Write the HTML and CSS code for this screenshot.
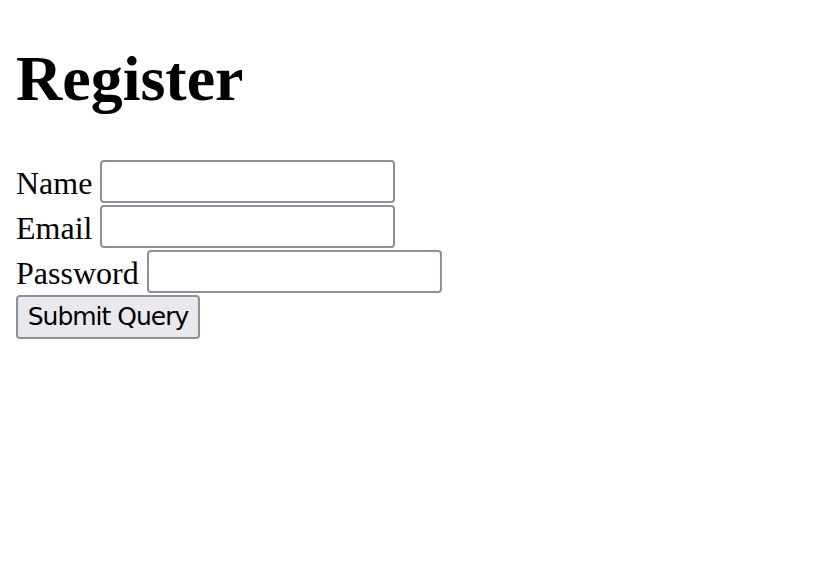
FILE: index.html
```html
<!DOCTYPE html>
<html>
<head>
<meta charset="utf-8">
<title>Register</title>
<link rel="stylesheet" href="styles.css">
</head>
<body>
<h1 class="title">Register</h1>
<form class="form">
  <div class="row"><label class="label">Name</label><input class="field" type="text"></div>
  <div class="row"><label class="label">Email</label><input class="field" type="text"></div>
  <div class="row"><label class="label">Password</label><input class="field" type="password"></div>
  <div class="row"><button class="submit" type="button">Submit Query</button></div>
</form>
</body>
</html>
```
FILE: styles.css
```css
html, body {
  background: #fff;
}
body {
  margin: 16px;
  font-family: "Liberation Serif", "Times New Roman", serif;
  font-size: 32px;
  color: #000;
}
.title {
  font-size: 64px;
  font-weight: bold;
  margin: 26px 0 43px;
  line-height: 74px;
}
.form {
  display: flex;
  flex-direction: column;
}
.row {
  display: flex;
  align-items: center;
  gap: 8px;
  height: 45px;
}
.label {
  line-height: 37px;
  padding-top: 4px;
}
.field {
  box-sizing: border-box;
  width: 295px;
  height: 43px;
  margin: 0;
  border: 2px solid #8f8f9d;
  border-radius: 4px;
  background: #fff;
  padding: 2px 4px;
  font-size: 26px;
}
.submit {
  box-sizing: border-box;
  width: 184px;
  height: 44px;
  margin: 0;
  padding: 0;
  border: 2px solid #8f8f9d;
  border-radius: 4px;
  background: #e9e9ed;
  color: #000;
  font-family: "DejaVu Sans", Verdana, sans-serif;
  font-size: 25px;
  letter-spacing: -1px;
}
```
